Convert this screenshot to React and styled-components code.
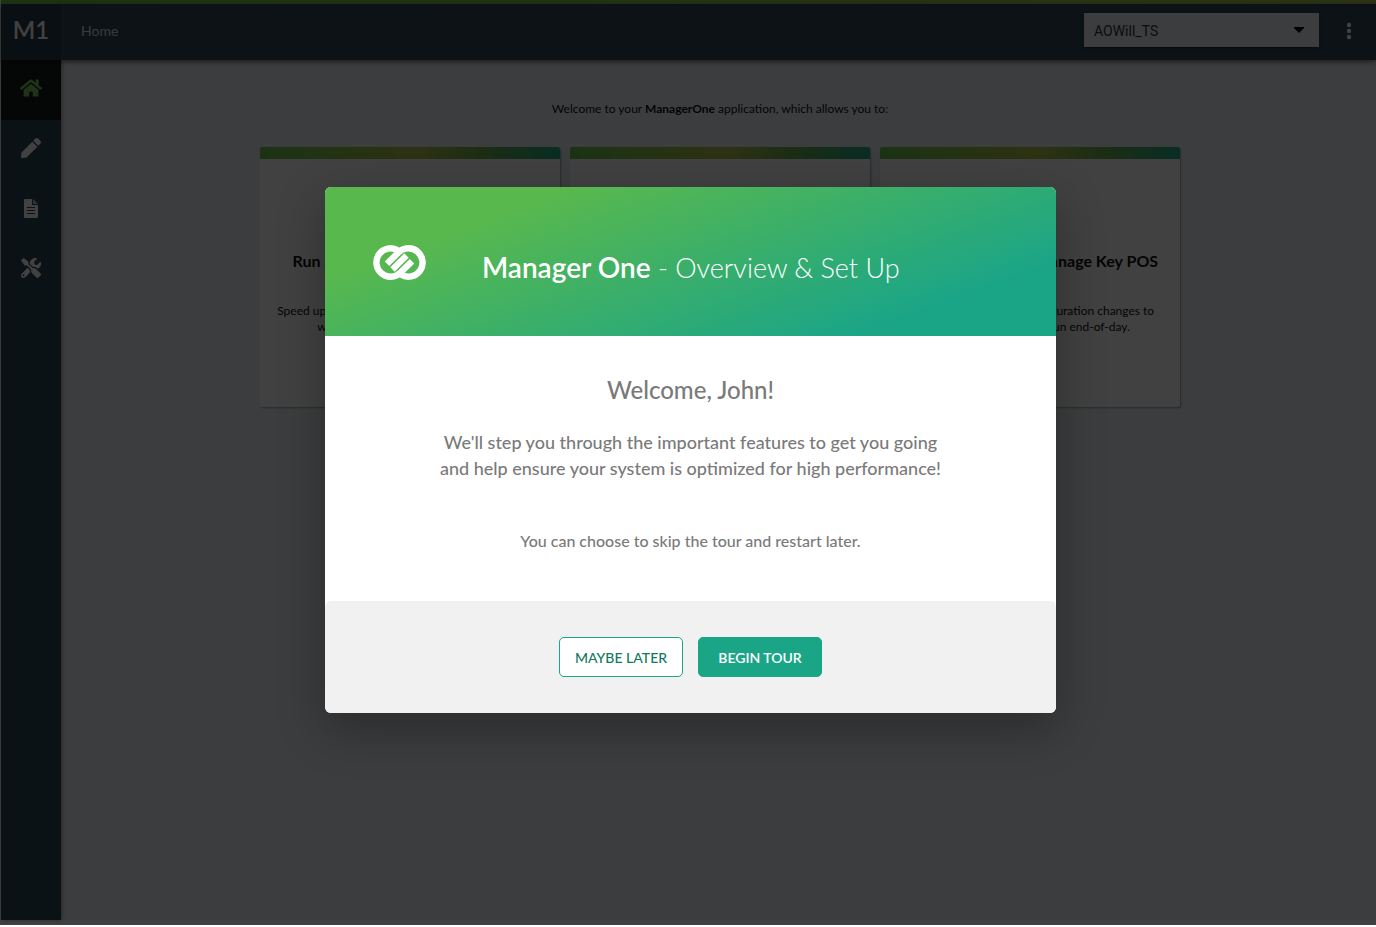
import React from "react";
import styled, { createGlobalStyle, css } from "styled-components";
import { FaHome, FaPen, FaTools } from "react-icons/fa";

const Global = createGlobalStyle`
  * { box-sizing: border-box; }
  body { margin: 0; background: #fff; font-family: Lato, "Liberation Sans", sans-serif; }
  h1, h2, h3, p { margin: 0; }
  button, select { font: inherit; }
`;

const Page = styled.div`
  position: relative;
  display: flex;
  min-height: calc(100vh - 2px);
  padding: 0 0 5px 1px;
  background: #fff;
`;

const Shell = styled.div`
  flex: 1;
  display: flex;
  flex-direction: column;
  background: #ecf0f3;
`;

const Accent = styled.div`
  height: 4px;
  background: linear-gradient(90deg, #6ac84a, #a9c84e);
`;

const TopBar = styled.header`
  position: relative;
  display: flex;
  align-items: center;
  height: 56px;
  padding: 0 12px 4px 0;
  background: linear-gradient(90deg, #263c4a 60px, #2f4758 60px);
  box-shadow: 0 2px 5px rgba(0, 0, 0, 0.5);
`;

const Brand = styled.a`
  width: 60px;
  color: #fff;
  font-size: 24px;
  font-weight: 600;
  line-height: 28px;
  text-align: center;
  text-decoration: none;
`;

const Crumb = styled.nav`
  flex: 1;
  padding-left: 20px;
  color: #dde3e8;
  font-size: 14px;
`;

const SelectWrap = styled.label`
  position: relative;
  display: block;
  width: 235px;
`;

const StoreSelect = styled.select`
  appearance: none;
  width: 100%;
  height: 34px;
  padding: 2px 10px 0;
  border: 0;
  border-radius: 0;
  background: #eceff1;
  color: #333;
  font-family: Roboto, sans-serif;
  font-size: 14px;
  box-shadow: 0 1px 3px rgba(0, 0, 0, 0.4);
`;

const Caret = styled.svg`
  position: absolute;
  top: 14px;
  right: 15px;
  pointer-events: none;
`;

const MoreButton = styled.button`
  display: flex;
  justify-content: center;
  width: 30px;
  margin-left: 15px;
  padding: 2px 0 0;
  border: 0;
  background: none;
  color: #fff;
`;

const Columns = styled.div`
  flex: 1;
  display: flex;
`;

const Sidebar = styled.nav`
  width: 60px;
  background: #2b4652;
  box-shadow: 1px 0 4px rgba(0, 0, 0, 0.4);
`;

const SideLink = styled.a`
  display: flex;
  align-items: center;
  justify-content: center;
  height: 60px;
  padding-bottom: 4px;
  color: ${(p) => (p.$active ? "#7cc862" : "#fff")};
  background: ${(p) => (p.$active ? "#171d1f" : "transparent")};
`;

const Main = styled.main`
  flex: 1;
  padding: 41px 0 0 3px;
  text-align: center;
`;

const Intro = styled.p`
  color: #111;
  font-size: 12px;
  line-height: 16px;
`;

const Cards = styled.div`
  display: flex;
  justify-content: center;
  gap: 10px;
  margin-top: 30px;
`;

const Card = styled.article`
  width: 300px;
  height: 260px;
  overflow: hidden;
  border-radius: 2px;
  background: #fff;
  color: #111;
  box-shadow: 1px 1px 2px rgba(0, 0, 0, 0.35);

  &::before {
    content: "";
    display: block;
    height: 12px;
    background: linear-gradient(90deg, #68c850, #b5c44a 52%, #6cb050 75%, #24b08c);
  }
`;

const CardTitle = styled.h2`
  margin-top: 92px;
  font-size: 16px;
  font-weight: 700;
  line-height: 20px;
`;

const CardText = styled.p`
  margin-top: 32px;
  font-size: 12px;
  line-height: 16px;
  white-space: pre-line;
`;

const Overlay = styled.div`
  position: absolute;
  inset: 0;
  display: flex;
  align-items: flex-start;
  justify-content: center;
  padding: 187px 0 0 5px;
  background: rgba(0, 0, 0, 0.745);
`;

const Dialog = styled.section`
  width: 100%;
  max-width: 731px;
  overflow: hidden;
  border-radius: 6px;
  background: #fff;
  box-shadow: 0 16px 48px rgba(0, 0, 0, 0.3);
`;

const DialogHead = styled.header`
  display: flex;
  align-items: center;
  gap: 56px;
  height: 149px;
  padding: 2px 48px 0;
  background: linear-gradient(160deg, #58b84e 22%, #1ba587 82%);
  color: #fff;
`;

const DialogTitle = styled.h1`
  padding-top: 10px;
  font-size: 27px;
  font-weight: 300;
  line-height: 34px;

  b { font-size: 28px; font-weight: 600; }
`;

const DialogBody = styled.div`
  padding: 38px 48px 50px;
  color: #7a7a7a;
  font-weight: 500;
  text-align: center;
`;

const Greeting = styled.h2`
  font-size: 24px;
  font-weight: 500;
  line-height: 32px;
`;

const Lead = styled.p`
  margin-top: 23px;
  font-size: 18px;
  line-height: 26px;
`;

const Note = styled.p`
  margin-top: 50px;
  font-size: 16px;
  line-height: 20px;
`;

const Actions = styled.footer`
  display: flex;
  justify-content: center;
  gap: 15px;
  padding: 36px;
  border-radius: 6px 6px 0 0;
  background: #f1f1f1;
`;

const Button = styled.button`
  width: 124px;
  height: 40px;
  padding: 0;
  border: 1px solid #1ba587;
  border-radius: 5px;
  font-size: 14px;
  font-weight: 500;
  ${(p) =>
    p.$primary
      ? css`background: #1ba587; color: #fff; font-weight: 600;`
      : css`background: #fff; color: #15795f;`}
`;

const Logo = () => (
  <svg width="53" height="35" viewBox="0 0 53 35" fill="none" stroke="#fff" strokeWidth="6.4" aria-hidden="true">
    <path d="M14 18.8L25.4 7.4A14.2 14.2 0 1 1 28 29.6" />
    <path d="M39 16.2L27.6 27.6A14.2 14.2 0 1 1 25 5.4" />
    <path d="M19.5 24.5L33.5 10.5" strokeWidth="6.2" />
  </svg>
);

const DocIcon = () => (
  <svg width="14" height="19" viewBox="0 0 14 19" fill="currentColor" aria-hidden="true">
    <path fillRule="evenodd" d="M1 0H8V6H14V18Q14 19 13 19H1Q0 19 0 18V1Q0 0 1 0ZM3 8V9H11V8ZM3 11V12H11V11ZM3 14V15H11V14Z" />
    <path d="M9 0L14 5H9Z" opacity=".75" />
  </svg>
);

const cards = [
  {
    title: "Run an Accelerated Close-of-Day",
    text: "Speed up your nightly end-of-day processing times\nwith automated task handling daily.",
  },
  { title: "", text: "" },
  {
    title: "Remotely Edit and Manage Key POS",
    text: "Schedule all your POS configuration changes to\ntake effect before you run end-of-day.",
  },
];

export default function App() {
  return (
    <>
      <Global />
      <Page>
        <Shell>
          <Accent />
          <TopBar>
            <Brand href="#home">M1</Brand>
            <Crumb>Home</Crumb>
            <SelectWrap>
              <StoreSelect aria-label="Store" defaultValue="AOWill_TS">
                <option>AOWill_TS</option>
              </StoreSelect>
              <Caret width="10" height="6" viewBox="0 0 10 6" aria-hidden="true">
                <path d="M0 0H10V1L5 6L0 1Z" />
              </Caret>
            </SelectWrap>
            <MoreButton aria-label="More options">
              <svg width="6" height="18" viewBox="0 0 6 18" fill="currentColor" aria-hidden="true">
                <circle cx="3" cy="3" r="2.2" />
                <circle cx="3" cy="9" r="2.2" />
                <circle cx="3" cy="15" r="2.2" />
              </svg>
            </MoreButton>
          </TopBar>
          <Columns>
            <Sidebar aria-label="Main">
              <SideLink $active href="#home" aria-label="Home"><FaHome size={22} /></SideLink>
              <SideLink href="#edit" aria-label="Edit"><FaPen size={20} /></SideLink>
              <SideLink href="#reports" aria-label="Reports"><DocIcon /></SideLink>
              <SideLink href="#tools" aria-label="Tools"><FaTools size={20} /></SideLink>
            </Sidebar>
            <Main>
              <Intro>Welcome to your <b>ManagerOne</b> application, which allows you to:</Intro>
              <Cards>
                {cards.map(({ title, text }, i) => (
                  <Card key={i}>
                    {title && <CardTitle>{title}</CardTitle>}
                    {text && <CardText>{text}</CardText>}
                  </Card>
                ))}
              </Cards>
            </Main>
          </Columns>
        </Shell>
        <Overlay>
          <Dialog role="dialog" aria-modal="true" aria-labelledby="tour-title">
            <DialogHead>
              <Logo />
              <DialogTitle id="tour-title"><b>Manager One</b> - Overview &amp; Set Up</DialogTitle>
            </DialogHead>
            <DialogBody>
              <Greeting>Welcome, John!</Greeting>
              <Lead>
                We'll step you through the important features to get you going<br />
                and help ensure your system is optimized for high performance!
              </Lead>
              <Note>You can choose to skip the tour and restart later.</Note>
            </DialogBody>
            <Actions>
              <Button>MAYBE LATER</Button>
              <Button $primary>BEGIN TOUR</Button>
            </Actions>
          </Dialog>
        </Overlay>
      </Page>
    </>
  );
}
